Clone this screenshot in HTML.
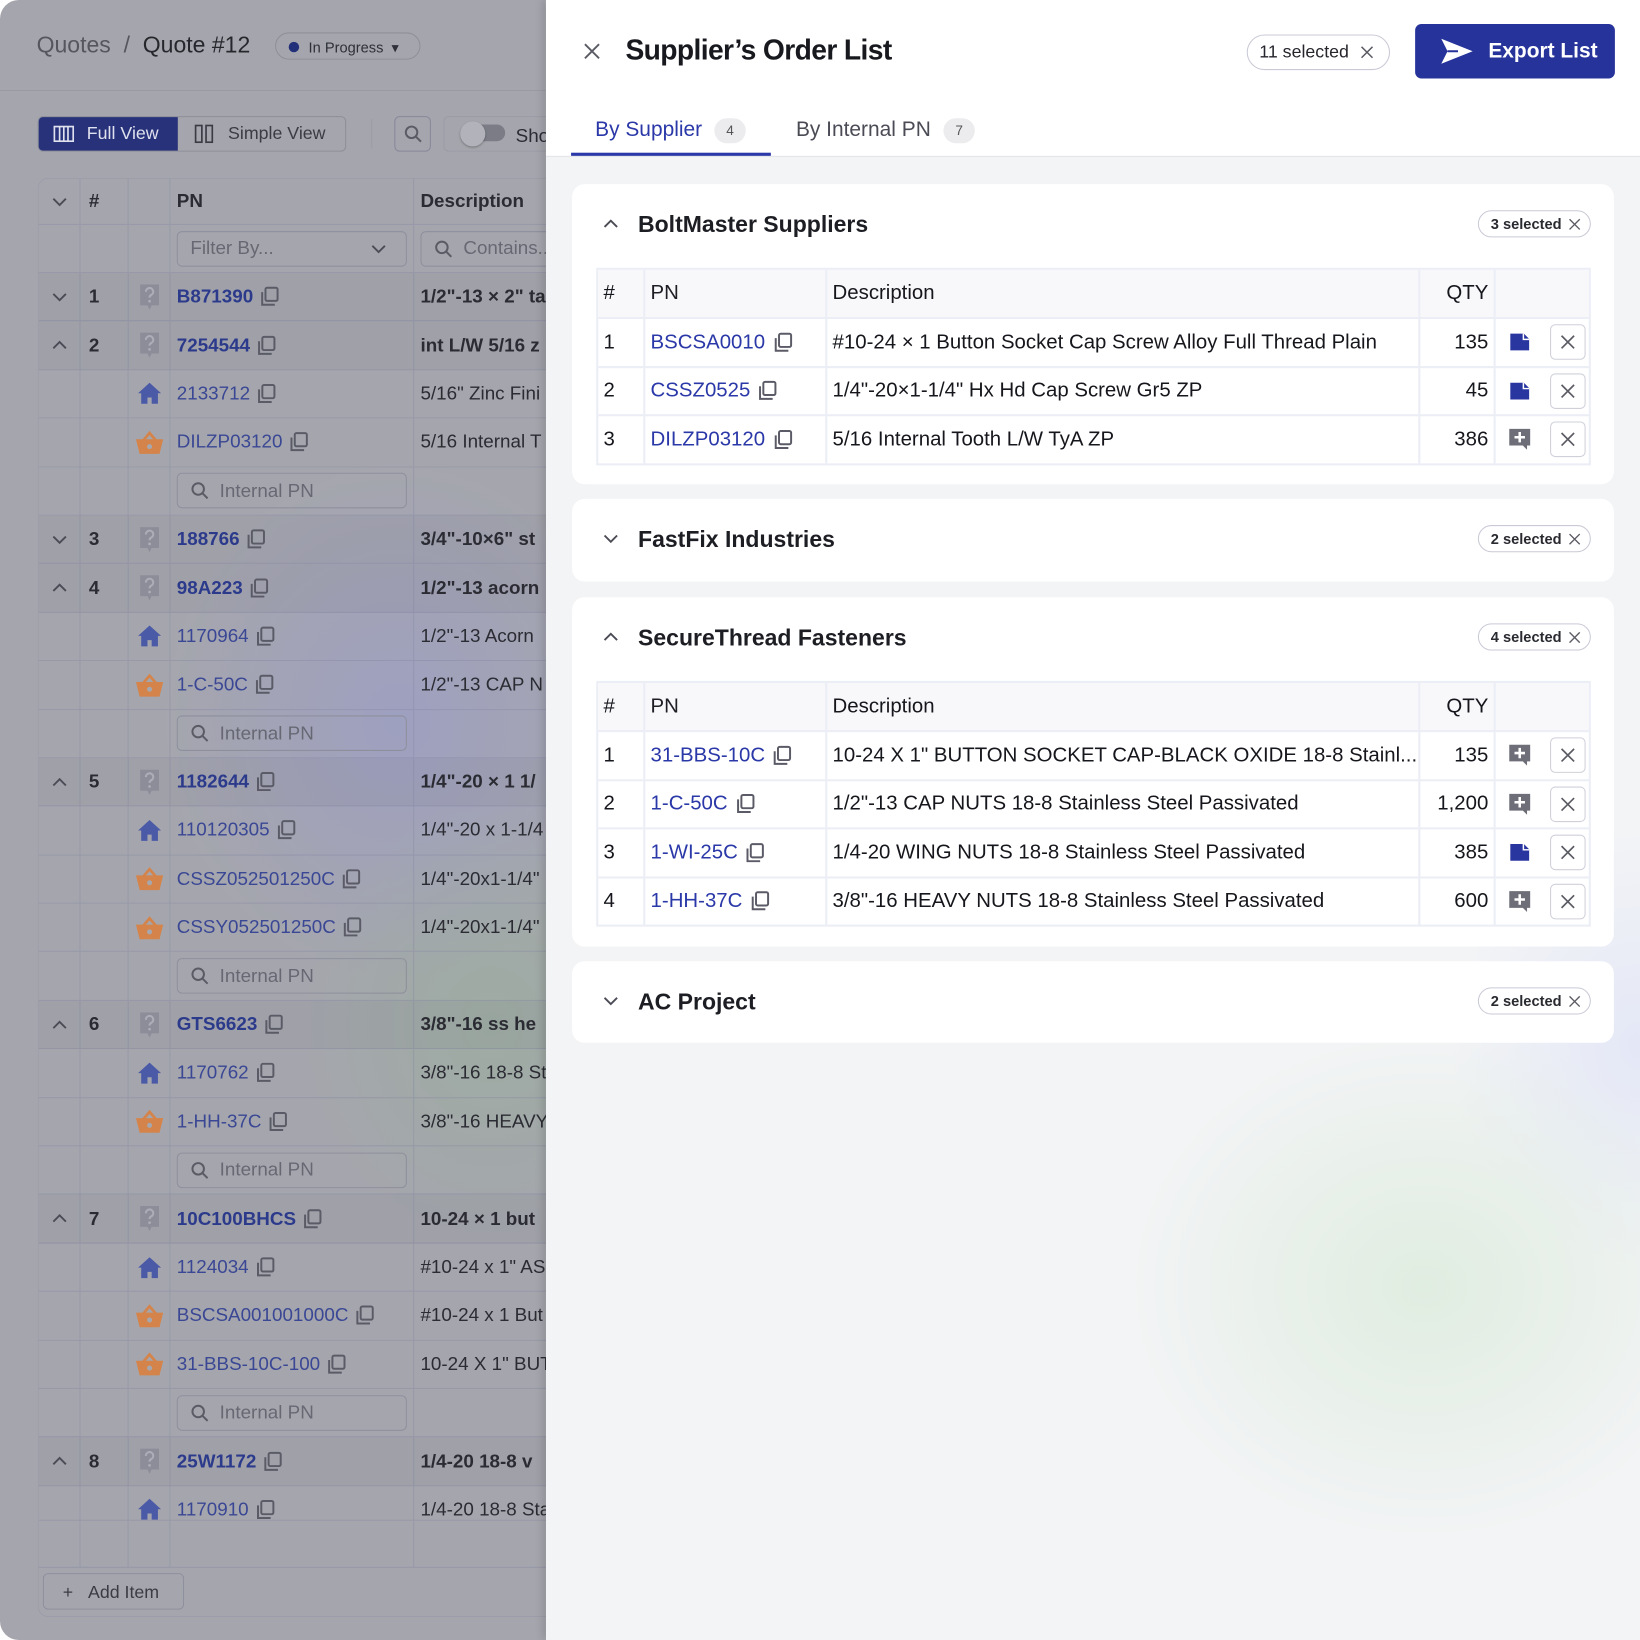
<!DOCTYPE html>
<html><head><meta charset="utf-8"><style>
*{box-sizing:border-box;margin:0;padding:0}
html,body{width:1640px;height:1640px;overflow:hidden;background:#fff;font-family:"Liberation Sans",Arial,sans-serif}
#w{position:absolute;left:0;top:0;width:1568px;height:1568px;transform:scale(1.04592);transform-origin:0 0}
#left{position:absolute;left:0;top:0;width:530px;height:1568px;border-radius:18px 0 0 18px;overflow:hidden;
background:radial-gradient(ellipse 260px 300px at 470px 980px,rgba(150,178,150,.45),transparent 70%),radial-gradient(ellipse 300px 330px at 380px 690px,rgba(150,152,215,.45),transparent 75%),#a5a6ad}
.ab{position:absolute}
.hdr{left:0;top:0;width:530px;height:87px;border-bottom:1px solid #9a9ba3}
.bc{left:35px;top:30px;font-size:22px;color:#55565e}
.bc b{font-weight:normal;color:#26272d}
.pill{position:absolute;left:263px;top:31px;width:139px;height:26px;border:1px solid #8e8f99;border-radius:13px;font-size:14px;color:#2e2f38;padding:5px 0 0 31px}
.pill:before{content:"";position:absolute;left:12px;top:8px;width:10px;height:10px;border-radius:50%;background:#22307a}
.tb{top:111px;height:34px}
.lt{position:absolute;left:36px;top:170px;width:494px;height:1376px;border:1px solid #9c9daa;border-right:none;border-radius:10px 0 0 10px;overflow:hidden}
.row{display:flex;height:46.4px;border-bottom:1px solid rgba(125,128,160,.35);font-size:18px;color:#2b2c33}
.row>div{border-right:1px solid rgba(125,128,160,.35);display:flex;align-items:center;flex:none;white-space:nowrap;overflow:hidden}
.c1{width:40px;justify-content:center;color:#4a4b55}.c2{width:46px;padding-left:8px;font-weight:bold}.c3{width:40px;justify-content:center}.c4{width:233px;padding-left:6px;gap:5px;color:#3a4794}.c5{width:140px;padding-left:6px}
.p{background:rgba(60,62,80,.05)}
.p .c4{color:#2c3a8c;font-weight:bold}.p .c5{font-weight:bold}
.sb{width:220px;height:34px;border:1px solid #8e8f9d;border-radius:5px;display:flex;align-items:center;padding-left:12px;gap:10px;color:#676873;font-size:18px}
#right{position:absolute;left:522px;top:0;width:1046px;height:1568px;background:radial-gradient(ellipse 420px 360px at 840px 1230px,rgba(222,236,222,.9),transparent 70%),radial-gradient(ellipse 260px 300px at 1046px 1000px,rgba(226,230,246,.9),transparent 70%),#f3f4f6;box-shadow:-3px 0 8px rgba(0,0,0,.15)}
.top{left:0;top:0;width:1046px;height:150px;background:#fff;border-bottom:1px solid #e2e3e8}
.card{position:absolute;left:25px;width:996px;background:#fff;border-radius:12px}
.ctitle{position:absolute;left:63px;top:26px;font-size:22px;font-weight:bold;color:#1d1e24}
.chev{position:absolute;left:29px;top:30px}
.sp{position:absolute;right:22px;top:25px;height:26px;border:1.5px solid #c9cad6;border-radius:13px;font-size:14px;font-weight:bold;color:#2a2b31;padding:0 8px 0 11px;display:flex;align-items:center;gap:6px}
.tbl{position:absolute;left:23px;top:80px;width:951px;border:2px solid #eceef6}
.tr{display:flex;height:46.5px;border-top:2px solid #eceef6;font-size:19.5px;color:#16171c}
.tr:first-child{border-top:none;background:#f8f8fb;height:45px}
.tr>div{display:flex;align-items:center;flex:none;border-right:2px solid #eceef6;white-space:nowrap;overflow:hidden}
.t1{width:45px;padding-left:5px}.t2{width:174px;padding-left:5px;gap:6px;color:#2a38a8}.t3{width:567px;padding-left:5px}.t4{width:72px;justify-content:flex-end;padding-right:5px}.t5{width:89px;border-right:none!important;padding-left:12px;gap:18px}
.xb{width:34px;height:34px;border:1.5px solid #cfd0da;border-radius:5px;display:flex;align-items:center;justify-content:center}
</style></head><body>
<svg width="0" height="0" style="position:absolute">
<defs>
<symbol id="cp" viewBox="0 0 20 20"><path d="M3.5 6v11.5h11.5" fill="none" stroke="currentColor" stroke-width="1.8"/><rect x="6.5" y="2" width="11" height="12" rx="1.5" fill="none" stroke="currentColor" stroke-width="1.8"/></symbol>
<symbol id="hm" viewBox="0 0 24 22"><path d="M12 1L1 11h3v10h6v-6h4v6h6V11h3z" fill="#4b5aa6"/></symbol>
<symbol id="bk" viewBox="0 0 28 24"><path d="M8 10L14 3l6 7" stroke="#d4844a" stroke-width="2.6" fill="none"/><path d="M1 9h26l-3.5 14h-19z" fill="#d4844a"/><circle cx="14" cy="16" r="2.4" fill="#a6a7ae"/></symbol>
<symbol id="q" viewBox="0 0 22 26"><path d="M2 1h18v20h-7l-2 4-2-4H2z" fill="#8c8d99"/><path d="M7.5 8a3.5 3.5 0 1 1 5 3c-1 .6-1.5 1-1.5 2.5" fill="none" stroke="#acadb6" stroke-width="2"/><circle cx="11" cy="17" r="1.3" fill="#acadb6"/></symbol>
<symbol id="fi" viewBox="0 0 22 18"><path d="M2 1h13l5 5v11H2z" fill="#2a36a0"/><path d="M14.5 1v5.5H20" fill="none" stroke="#fff" stroke-width="1.4"/></symbol>
<symbol id="mi" viewBox="0 0 22 22"><path d="M1 1h20v16h-3v4l-4-4H1z" fill="#6e6e78"/><path d="M11 4v10M6 9h10" stroke="#fff" stroke-width="2.4"/></symbol>
<symbol id="xx" viewBox="0 0 16 16"><path d="M2 2l12 12M14 2L2 14" stroke="#5a5b63" stroke-width="1.6"/></symbol>
<symbol id="cd" viewBox="0 0 16 16"><path d="M2 5l6 6 6-6" fill="none" stroke="#4a4b55" stroke-width="1.8"/></symbol>
<symbol id="cu" viewBox="0 0 16 16"><path d="M2 11l6-6 6 6" fill="none" stroke="#4a4b55" stroke-width="1.8"/></symbol>
<symbol id="sr" viewBox="0 0 18 18"><circle cx="7.5" cy="7.5" r="5.5" fill="none" stroke="#5a5b65" stroke-width="1.9"/><path d="M11.5 11.5l5 5" stroke="#5a5b65" stroke-width="1.9"/></symbol>
</defs></svg>
<div id="w">
<div id="left">
 <div class="ab hdr"></div>
 <div class="ab bc">Quotes &nbsp;/&nbsp; <b>Quote #12</b></div>
 <div class="pill">In Progress &nbsp;▾</div>
 <div class="ab tb" style="left:36px;width:295px;border:1px solid #8d8e98;border-radius:5px;display:flex;font-size:17px">
  <div style="width:133px;background:#27327a;color:#dfe1ee;display:flex;align-items:center;gap:12px;padding-left:14px;border-radius:4px 0 0 4px"><svg width="20" height="16"><rect x="1" y="1" width="18" height="14" fill="none" stroke="#dfe1ee" stroke-width="1.6"/><path d="M6 1v14M10 1v14M14 1v14" stroke="#dfe1ee" stroke-width="1.6"/></svg>Full View</div>
  <div style="flex:1;display:flex;align-items:center;gap:14px;padding-left:16px;color:#3a3b44"><svg width="18" height="18"><rect x="1" y="1" width="6" height="16" fill="none" stroke="#3a3b44" stroke-width="1.6"/><rect x="11" y="1" width="6" height="16" fill="none" stroke="#3a3b44" stroke-width="1.6"/></svg>Simple View</div>
 </div>
 <div class="ab" style="left:355px;top:114px;width:1px;height:28px;background:#9a9ba4"></div>
 <div class="ab tb" style="left:377px;width:35px;border:1px solid #86879a;border-radius:5px;display:flex;align-items:center;justify-content:center"><svg width="18" height="18"><use href="#sr"/></svg></div>
 <div class="ab tb" style="left:424px;width:130px;border:1px solid #9a9ba6;border-radius:5px;font-size:18px;color:#2b2c33;padding:8px 0 0 68px">Show</div>
 <div class="ab" style="left:443px;top:119px;width:40px;height:16px;border-radius:8px;background:#7b7c86"></div>
 <div class="ab" style="left:440px;top:116px;width:24px;height:24px;border-radius:50%;background:#b2b3ba;box-shadow:0 1px 2px rgba(0,0,0,.3)"></div>
 <div class="lt">
  <div class="row" style="height:44px;font-weight:bold"><div class="c1"><svg width="16" height="16"><use href="#cd"/></svg></div><div class="c2">#</div><div class="c3"></div><div class="c4" style="color:#2b2c33">PN</div><div class="c5">Description</div></div>
  <div class="row" style="height:46px"><div class="c1"></div><div class="c2"></div><div class="c3"></div><div class="c4"><div class="sb" style="justify-content:space-between;padding-right:18px">Filter By... <svg width="16" height="16"><use href="#cd"/></svg></div></div><div class="c5"><div class="sb" style="width:140px"><svg width="18" height="18"><use href="#sr"/></svg>Contains...</div></div></div>
  <div style="height:1192px;overflow:hidden">
   <div class="row p"><div class="c1"><svg width="16" height="16"><use href="#cd"/></svg></div><div class="c2">1</div><div class="c3"><svg width="22" height="26"><use href="#q"/></svg></div><div class="c4">B871390<svg width="21" height="21" style="color:#5a5b66"><use href="#cp"/></svg></div><div class="c5">1/2"-13 × 2" ta</div></div>
   <div class="row p"><div class="c1"><svg width="16" height="16"><use href="#cu"/></svg></div><div class="c2">2</div><div class="c3"><svg width="22" height="26"><use href="#q"/></svg></div><div class="c4">7254544<svg width="21" height="21" style="color:#5a5b66"><use href="#cp"/></svg></div><div class="c5">int L/W 5/16 z</div></div>
   <div class="row"><div class="c1"></div><div class="c2"></div><div class="c3"><svg width="24" height="22"><use href="#hm"/></svg></div><div class="c4">2133712<svg width="21" height="21" style="color:#5a5b66"><use href="#cp"/></svg></div><div class="c5">5/16" Zinc Fini</div></div>
   <div class="row"><div class="c1"></div><div class="c2"></div><div class="c3"><svg width="28" height="24"><use href="#bk"/></svg></div><div class="c4">DILZP03120<svg width="21" height="21" style="color:#5a5b66"><use href="#cp"/></svg></div><div class="c5">5/16 Internal T</div></div>
   <div class="row"><div class="c1"></div><div class="c2"></div><div class="c3"></div><div class="c4"><div class="sb"><svg width="18" height="18"><use href="#sr"/></svg>Internal PN</div></div><div class="c5"></div></div>
   <div class="row p"><div class="c1"><svg width="16" height="16"><use href="#cd"/></svg></div><div class="c2">3</div><div class="c3"><svg width="22" height="26"><use href="#q"/></svg></div><div class="c4">188766<svg width="21" height="21" style="color:#5a5b66"><use href="#cp"/></svg></div><div class="c5">3/4"-10×6" st</div></div>
   <div class="row p"><div class="c1"><svg width="16" height="16"><use href="#cu"/></svg></div><div class="c2">4</div><div class="c3"><svg width="22" height="26"><use href="#q"/></svg></div><div class="c4">98A223<svg width="21" height="21" style="color:#5a5b66"><use href="#cp"/></svg></div><div class="c5">1/2"-13 acorn</div></div>
   <div class="row"><div class="c1"></div><div class="c2"></div><div class="c3"><svg width="24" height="22"><use href="#hm"/></svg></div><div class="c4">1170964<svg width="21" height="21" style="color:#5a5b66"><use href="#cp"/></svg></div><div class="c5">1/2"-13 Acorn</div></div>
   <div class="row"><div class="c1"></div><div class="c2"></div><div class="c3"><svg width="28" height="24"><use href="#bk"/></svg></div><div class="c4">1-C-50C<svg width="21" height="21" style="color:#5a5b66"><use href="#cp"/></svg></div><div class="c5">1/2"-13 CAP N</div></div>
   <div class="row"><div class="c1"></div><div class="c2"></div><div class="c3"></div><div class="c4"><div class="sb"><svg width="18" height="18"><use href="#sr"/></svg>Internal PN</div></div><div class="c5"></div></div>
   <div class="row p"><div class="c1"><svg width="16" height="16"><use href="#cu"/></svg></div><div class="c2">5</div><div class="c3"><svg width="22" height="26"><use href="#q"/></svg></div><div class="c4">1182644<svg width="21" height="21" style="color:#5a5b66"><use href="#cp"/></svg></div><div class="c5">1/4"-20 × 1 1/</div></div>
   <div class="row"><div class="c1"></div><div class="c2"></div><div class="c3"><svg width="24" height="22"><use href="#hm"/></svg></div><div class="c4">110120305<svg width="21" height="21" style="color:#5a5b66"><use href="#cp"/></svg></div><div class="c5">1/4"-20 x 1-1/4</div></div>
   <div class="row"><div class="c1"></div><div class="c2"></div><div class="c3"><svg width="28" height="24"><use href="#bk"/></svg></div><div class="c4">CSSZ052501250C<svg width="21" height="21" style="color:#5a5b66"><use href="#cp"/></svg></div><div class="c5">1/4"-20x1-1/4"</div></div>
   <div class="row"><div class="c1"></div><div class="c2"></div><div class="c3"><svg width="28" height="24"><use href="#bk"/></svg></div><div class="c4">CSSY052501250C<svg width="21" height="21" style="color:#5a5b66"><use href="#cp"/></svg></div><div class="c5">1/4"-20x1-1/4"</div></div>
   <div class="row"><div class="c1"></div><div class="c2"></div><div class="c3"></div><div class="c4"><div class="sb"><svg width="18" height="18"><use href="#sr"/></svg>Internal PN</div></div><div class="c5"></div></div>
   <div class="row p"><div class="c1"><svg width="16" height="16"><use href="#cu"/></svg></div><div class="c2">6</div><div class="c3"><svg width="22" height="26"><use href="#q"/></svg></div><div class="c4">GTS6623<svg width="21" height="21" style="color:#5a5b66"><use href="#cp"/></svg></div><div class="c5">3/8"-16 ss he</div></div>
   <div class="row"><div class="c1"></div><div class="c2"></div><div class="c3"><svg width="24" height="22"><use href="#hm"/></svg></div><div class="c4">1170762<svg width="21" height="21" style="color:#5a5b66"><use href="#cp"/></svg></div><div class="c5">3/8"-16 18-8 St</div></div>
   <div class="row"><div class="c1"></div><div class="c2"></div><div class="c3"><svg width="28" height="24"><use href="#bk"/></svg></div><div class="c4">1-HH-37C<svg width="21" height="21" style="color:#5a5b66"><use href="#cp"/></svg></div><div class="c5">3/8"-16 HEAVY</div></div>
   <div class="row"><div class="c1"></div><div class="c2"></div><div class="c3"></div><div class="c4"><div class="sb"><svg width="18" height="18"><use href="#sr"/></svg>Internal PN</div></div><div class="c5"></div></div>
   <div class="row p"><div class="c1"><svg width="16" height="16"><use href="#cu"/></svg></div><div class="c2">7</div><div class="c3"><svg width="22" height="26"><use href="#q"/></svg></div><div class="c4">10C100BHCS<svg width="21" height="21" style="color:#5a5b66"><use href="#cp"/></svg></div><div class="c5">10-24 × 1 but</div></div>
   <div class="row"><div class="c1"></div><div class="c2"></div><div class="c3"><svg width="24" height="22"><use href="#hm"/></svg></div><div class="c4">1124034<svg width="21" height="21" style="color:#5a5b66"><use href="#cp"/></svg></div><div class="c5">#10-24 x 1" AS</div></div>
   <div class="row"><div class="c1"></div><div class="c2"></div><div class="c3"><svg width="28" height="24"><use href="#bk"/></svg></div><div class="c4">BSCSA001001000C<svg width="21" height="21" style="color:#5a5b66"><use href="#cp"/></svg></div><div class="c5">#10-24 x 1 But</div></div>
   <div class="row"><div class="c1"></div><div class="c2"></div><div class="c3"><svg width="28" height="24"><use href="#bk"/></svg></div><div class="c4">31-BBS-10C-100<svg width="21" height="21" style="color:#5a5b66"><use href="#cp"/></svg></div><div class="c5">10-24 X 1" BUT</div></div>
   <div class="row"><div class="c1"></div><div class="c2"></div><div class="c3"></div><div class="c4"><div class="sb"><svg width="18" height="18"><use href="#sr"/></svg>Internal PN</div></div><div class="c5"></div></div>
   <div class="row p"><div class="c1"><svg width="16" height="16"><use href="#cu"/></svg></div><div class="c2">8</div><div class="c3"><svg width="22" height="26"><use href="#q"/></svg></div><div class="c4">25W1172<svg width="21" height="21" style="color:#5a5b66"><use href="#cp"/></svg></div><div class="c5">1/4-20 18-8 v</div></div>
   <div class="row"><div class="c1"></div><div class="c2"></div><div class="c3"><svg width="24" height="22"><use href="#hm"/></svg></div><div class="c4">1170910<svg width="21" height="21" style="color:#5a5b66"><use href="#cp"/></svg></div><div class="c5">1/4-20 18-8 Sta</div></div>
  </div>
  <div class="row" style="height:46px;border-top:1px solid rgba(125,128,160,.35)"><div class="c1"></div><div class="c2"></div><div class="c3"></div><div class="c4"></div><div class="c5"></div></div>
 </div>
 <div class="ab" style="left:41px;top:1504px;width:135px;height:35px;border:1px solid #8e8f9d;border-radius:5px;font-size:17px;color:#3a3b44;padding:8px 0 0 18px">+ &nbsp;&nbsp;Add Item</div>
</div>

<div id="right">
 <div class="ab top"></div>
 <div class="ab" style="left:35px;top:40px"><svg width="18" height="18"><use href="#xx"/></svg></div>
 <div class="ab" style="left:76px;top:33px;font-size:27px;font-weight:bold;color:#18191f;letter-spacing:-.6px">Supplier’s Order List</div>
 <div class="ab" style="left:670px;top:33px;width:137px;height:34px;border:1.5px solid #c9cad6;border-radius:17px;font-size:17px;color:#25262c;display:flex;align-items:center;gap:10px;padding-left:11px">11 selected <svg width="14" height="14"><use href="#xx"/></svg></div>
 <div class="ab" style="left:831px;top:23px;width:191px;height:52px;background:#26339a;border-radius:6px;color:#fff;font-size:20px;font-weight:bold;display:flex;align-items:center;gap:14px;padding-left:24px"><svg width="32" height="26"><path d="M1 1l30 12L1 25l6-12z" fill="#fff"/><path d="M7 13h10" stroke="#26339a" stroke-width="2"/></svg>Export List</div>
 <div class="ab" style="left:47px;top:113px;font-size:20px;color:#2a38a8">By Supplier</div>
 <div class="ab" style="left:161px;top:113px;width:30px;height:24px;border-radius:12px;background:#ececef;font-size:13px;color:#555;text-align:center;padding-top:4px">4</div>
 <div class="ab" style="left:24px;top:146px;width:191px;height:3px;background:#2a38a8"></div>
 <div class="ab" style="left:239px;top:113px;font-size:20px;color:#4a4b55">By Internal PN</div>
 <div class="ab" style="left:380px;top:113px;width:30px;height:24px;border-radius:12px;background:#ececef;font-size:13px;color:#555;text-align:center;padding-top:4px">7</div>

 <div class="card" style="top:176px;height:287px">
  <svg class="chev" width="16" height="16"><use href="#cu"/></svg>
  <div class="ctitle">BoltMaster Suppliers</div><div class="sp">3 selected <svg width="13" height="13"><use href="#xx"/></svg></div>
  <div class="tbl">
   <div class="tr"><div class="t1">#</div><div class="t2" style="color:#1e1f25">PN</div><div class="t3">Description</div><div class="t4">QTY</div><div class="t5"></div></div>
   <div class="tr"><div class="t1">1</div><div class="t2">BSCSA0010<svg width="21" height="21" style="color:#5a5b66"><use href="#cp"/></svg></div><div class="t3">#10-24 × 1 Button Socket Cap Screw Alloy Full Thread Plain</div><div class="t4">135</div><div class="t5"><svg width="22" height="18"><use href="#fi"/></svg><div class="xb"><svg width="16" height="16"><use href="#xx"/></svg></div></div></div>
   <div class="tr"><div class="t1">2</div><div class="t2">CSSZ0525<svg width="21" height="21" style="color:#5a5b66"><use href="#cp"/></svg></div><div class="t3">1/4"-20×1-1/4" Hx Hd Cap Screw Gr5 ZP</div><div class="t4">45</div><div class="t5"><svg width="22" height="18"><use href="#fi"/></svg><div class="xb"><svg width="16" height="16"><use href="#xx"/></svg></div></div></div>
   <div class="tr"><div class="t1">3</div><div class="t2">DILZP03120<svg width="21" height="21" style="color:#5a5b66"><use href="#cp"/></svg></div><div class="t3">5/16 Internal Tooth L/W TyA ZP</div><div class="t4">386</div><div class="t5"><svg width="22" height="22"><use href="#mi"/></svg><div class="xb"><svg width="16" height="16"><use href="#xx"/></svg></div></div></div>
  </div>
 </div>
 <div class="card" style="top:477px;height:79px">
  <svg class="chev" width="16" height="16"><use href="#cd"/></svg>
  <div class="ctitle">FastFix Industries</div><div class="sp">2 selected <svg width="13" height="13"><use href="#xx"/></svg></div>
 </div>
 <div class="card" style="top:571px;height:334px">
  <svg class="chev" width="16" height="16"><use href="#cu"/></svg>
  <div class="ctitle">SecureThread Fasteners</div><div class="sp">4 selected <svg width="13" height="13"><use href="#xx"/></svg></div>
  <div class="tbl">
   <div class="tr"><div class="t1">#</div><div class="t2" style="color:#1e1f25">PN</div><div class="t3">Description</div><div class="t4">QTY</div><div class="t5"></div></div>
   <div class="tr"><div class="t1">1</div><div class="t2">31-BBS-10C<svg width="21" height="21" style="color:#5a5b66"><use href="#cp"/></svg></div><div class="t3">10-24 X 1" BUTTON SOCKET CAP-BLACK OXIDE 18-8 Stainl...</div><div class="t4">135</div><div class="t5"><svg width="22" height="22"><use href="#mi"/></svg><div class="xb"><svg width="16" height="16"><use href="#xx"/></svg></div></div></div>
   <div class="tr"><div class="t1">2</div><div class="t2">1-C-50C<svg width="21" height="21" style="color:#5a5b66"><use href="#cp"/></svg></div><div class="t3">1/2"-13 CAP NUTS 18-8 Stainless Steel Passivated</div><div class="t4">1,200</div><div class="t5"><svg width="22" height="22"><use href="#mi"/></svg><div class="xb"><svg width="16" height="16"><use href="#xx"/></svg></div></div></div>
   <div class="tr"><div class="t1">3</div><div class="t2">1-WI-25C<svg width="21" height="21" style="color:#5a5b66"><use href="#cp"/></svg></div><div class="t3">1/4-20 WING NUTS 18-8 Stainless Steel Passivated</div><div class="t4">385</div><div class="t5"><svg width="22" height="18"><use href="#fi"/></svg><div class="xb"><svg width="16" height="16"><use href="#xx"/></svg></div></div></div>
   <div class="tr"><div class="t1">4</div><div class="t2">1-HH-37C<svg width="21" height="21" style="color:#5a5b66"><use href="#cp"/></svg></div><div class="t3">3/8"-16 HEAVY NUTS 18-8 Stainless Steel Passivated</div><div class="t4">600</div><div class="t5"><svg width="22" height="22"><use href="#mi"/></svg><div class="xb"><svg width="16" height="16"><use href="#xx"/></svg></div></div></div>
  </div>
 </div>
 <div class="card" style="top:919px;height:78px">
  <svg class="chev" width="16" height="16"><use href="#cd"/></svg>
  <div class="ctitle">AC Project</div><div class="sp">2 selected <svg width="13" height="13"><use href="#xx"/></svg></div>
 </div>
</div>
</div></body></html>
